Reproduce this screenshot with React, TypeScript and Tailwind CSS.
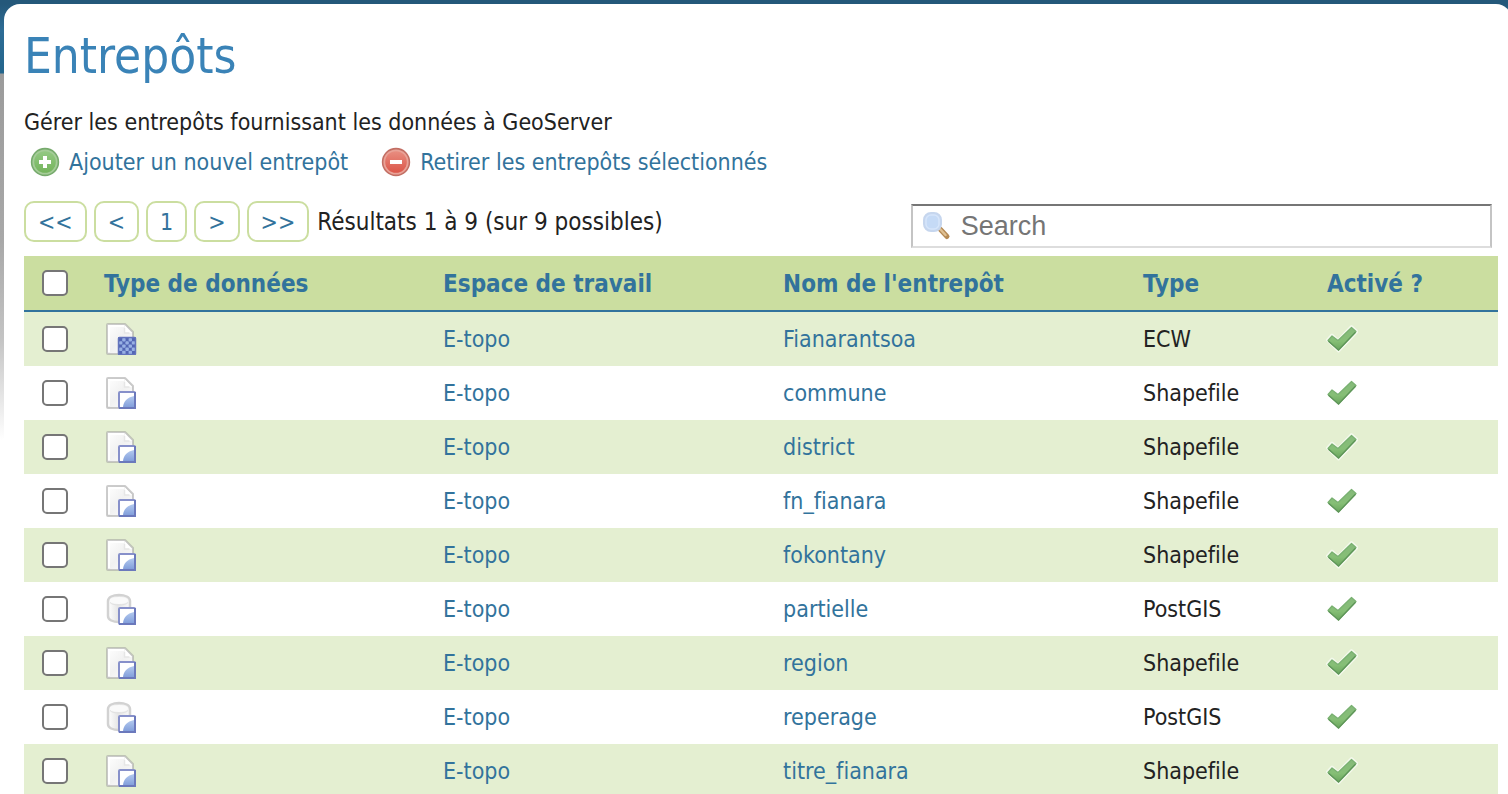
import React from "react";

type Kind = "raster" | "vector" | "database";

interface Store {
  kind: Kind;
  workspace: string;
  name: string;
  type: string;
}

const stores: Store[] = [
  { kind: "raster", workspace: "E-topo", name: "Fianarantsoa", type: "ECW" },
  { kind: "vector", workspace: "E-topo", name: "commune", type: "Shapefile" },
  { kind: "vector", workspace: "E-topo", name: "district", type: "Shapefile" },
  { kind: "vector", workspace: "E-topo", name: "fn_fianara", type: "Shapefile" },
  { kind: "vector", workspace: "E-topo", name: "fokontany", type: "Shapefile" },
  { kind: "database", workspace: "E-topo", name: "partielle", type: "PostGIS" },
  { kind: "vector", workspace: "E-topo", name: "region", type: "Shapefile" },
  { kind: "database", workspace: "E-topo", name: "reperage", type: "PostGIS" },
  { kind: "vector", workspace: "E-topo", name: "titre_fianara", type: "Shapefile" },
];

const kindLabels: Record<Kind, string> = {
  raster: "Données raster",
  vector: "Données vecteur",
  database: "Base de données",
};

const pages = ["<<", "<", "1", ">", ">>"];

function Gradients() {
  return (
    <svg width="0" height="0" className="absolute" aria-hidden="true">
      <defs>
        <linearGradient id="paper" x1="0" y1="0" x2="1" y2="1">
          <stop offset="0" stopColor="#ffffff" />
          <stop offset="0.5" stopColor="#f1f1f1" />
          <stop offset="1" stopColor="#ffffff" />
        </linearGradient>
        <linearGradient id="drum" x1="0" x2="1">
          <stop offset="0" stopColor="#ffffff" />
          <stop offset="0.45" stopColor="#e6e6e6" />
          <stop offset="1" stopColor="#f8f8f8" />
        </linearGradient>
        <linearGradient id="wave" x1="0" y1="0" x2="0" y2="1">
          <stop offset="0" stopColor="#b4caef" />
          <stop offset="1" stopColor="#829fdb" />
        </linearGradient>
        <linearGradient id="tick" x1="0" y1="0" x2="0" y2="1">
          <stop offset="0" stopColor="#86b97b" />
          <stop offset="0.6" stopColor="#86bf76" />
          <stop offset="1" stopColor="#6aa65d" />
        </linearGradient>
        <linearGradient id="green" x1="0" y1="0" x2="0" y2="1">
          <stop offset="0" stopColor="#93c983" />
          <stop offset="1" stopColor="#74b45c" />
        </linearGradient>
        <linearGradient id="red" x1="0" y1="0" x2="0" y2="1">
          <stop offset="0" stopColor="#e88d80" />
          <stop offset="1" stopColor="#dc5649" />
        </linearGradient>
      </defs>
    </svg>
  );
}

function StoreIcon({ kind }: { kind: Kind }) {
  const checks: [number, number][] = [];
  for (let row = 0; row < 5; row++) {
    for (let col = 0; col < 5; col++) {
      if ((row + col) % 2 === 1) checks.push([col, row]);
    }
  }
  return (
    <svg width="32" height="32" viewBox="0 0 32 32" role="img" aria-label={kindLabels[kind]} className="block">
      {kind === "database" ? (
        <g>
          <path
            d="M3 8C3 4 8 2 14 2s11 2 11 6v15c0 4-5 6-11 6S3 27 3 23Z"
            fill="url(#drum)"
            stroke="#d2d2d2"
            strokeWidth="2.500"
          />
          <ellipse cx="14" cy="7.500" rx="9" ry="3.500" fill="#fafafa" />
          <path d="M5 9.500c2 2 5 2.500 9 2.500s7-.5 9-2.500" fill="none" stroke="#e0e0e0" />
        </g>
      ) : (
        <g>
          <path
            d="M3 1H20L28 9V31H3Q2 31 2 30V2Q2 1 3 1Z"
            fill="url(#paper)"
            stroke="#999"
            strokeOpacity="0.5"
            strokeWidth="2"
            strokeLinejoin="round"
          />
          <path d="M4 29V3H19" fill="none" stroke="#fff" strokeWidth="2" />
          <path d="M20 2.500v7.500h7Z" fill="#fff" />
          <path d="M19.500 5v5h5" fill="none" stroke="#e6e6e6" strokeWidth="1.500" />
        </g>
      )}
      {kind === "raster" ? (
        <g>
          <rect x="13" y="14" width="18" height="18" rx="1" fill="#5366b4" />
          {checks.map(([col, row]) => (
            <rect key={`${col}-${row}`} x={14 + col * 3.2} y={15 + row * 3.2} width="3.400" height="3.400" rx="0.800" fill="#98b0e4" />
          ))}
          <rect x="13.500" y="14.500" width="17" height="17" rx="1" fill="none" stroke="#6373bd" strokeWidth="1.500" />
        </g>
      ) : (
        <g>
          <rect x="14" y="15" width="16" height="16" rx="1" fill="#fff" stroke="#8790ca" strokeWidth="2" />
          <path d="M18 30c.5-5.500 4-9.500 11-11v11Z" fill="url(#wave)" />
          <path d="M14 31h16V15" fill="none" stroke="#6b79bc" strokeWidth="2" />
        </g>
      )}
    </svg>
  );
}

function TickIcon() {
  return (
    <svg width="32" height="32" viewBox="0 0 32 32" role="img" aria-label="Activé" className="block">
      <path
        d="M1.500 17 6 12 12 17.500 25.500 3.500 31 8.500 12.500 28Z"
        fill="none"
        stroke="#fff"
        strokeOpacity="0.6"
        strokeWidth="3"
        strokeLinejoin="round"
      />
      <path
        d="M2 17.500 6 13 12 17.500 25.500 4.500 30 8.500 12.500 27Z"
        fill="url(#tick)"
        stroke="#78b070"
        strokeWidth="1.200"
        strokeLinejoin="round"
      />
      <path d="M2.500 18.300 12.500 27 29.500 9.200" fill="none" stroke="#5f9659" strokeWidth="1.300" strokeLinejoin="round" />
    </svg>
  );
}

function RoundIcon({ tone }: { tone: "add" | "remove" }) {
  const add = tone === "add";
  return (
    <svg width="32" height="32" viewBox="0 0 32 32" aria-hidden="true" className="block shrink-0">
      <circle cx="16" cy="16" r="14.200" fill={add ? "#76aa6c" : "#c26e63"} />
      <circle cx="16" cy="16" r="12.600" fill={add ? "#a5cc98" : "#e9a297"} />
      <circle cx="16" cy="16" r="10.800" fill={add ? "url(#green)" : "url(#red)"} />
      <path d={add ? "M14 10h4v4h4v4h-4v4h-4v-4h-4v-4h4Z" : "M10 14h12v4H10Z"} fill="#fff" />
    </svg>
  );
}

function SearchIcon() {
  return (
    <svg width="32" height="32" viewBox="0 0 32 32" aria-hidden="true" className="block shrink-0">
      <path d="M19.500 19.500l6.500 7" stroke="#b58a55" strokeWidth="5" strokeLinecap="round" />
      <path d="M19 19l5.500 6" stroke="#dfc093" strokeWidth="2.500" strokeLinecap="round" />
      <rect x="3" y="3" width="17" height="18" rx="7" fill="#c6d9f3" stroke="#c6d6ee" strokeWidth="2" />
      <rect x="5" y="5" width="13" height="14" rx="5" fill="#c5daf6" stroke="#d6e5fa" strokeWidth="1.500" />
    </svg>
  );
}

function Check({ label }: { label: string }) {
  return (
    <input
      type="checkbox"
      aria-label={label}
      className="block size-[26px] appearance-none rounded-[5px] border-2 border-[#767676] bg-white checked:bg-[#32739c]"
    />
  );
}

function SiteLink({ children }: { children: React.ReactNode }) {
  return (
    <a href="#" className="text-[#32739c] hover:underline">
      {children}
    </a>
  );
}

export default function App() {
  return (
    <div className="min-h-screen overflow-hidden bg-[linear-gradient(to_bottom,#24587a_0,#24587a_4px,#2d6c95_30px,#23658c_73px,#9b9b9b_74px,#a8a8a8_240px,#c4c4c4_340px,#ffffff_440px)] pt-1 pl-1 font-['DejaVu_Sans_Condensed','DejaVu_Sans',sans-serif] text-[23px] leading-8 text-[#222222] [font-variant-ligatures:none]">
      <Gradients />
      <main className="-mr-1 min-h-screen rounded-t-2xl bg-white pt-6 pr-[14px] pl-5">
        <h1 className="text-[49px] leading-[58px] text-[#3a83b7]">Entrepôts</h1>
        <p className="mt-5">Gérer les entrepôts fournissant les données à GeoServer</p>

        <div className="mt-1 flex gap-8 pl-[5px]">
          <a href="#" className="flex h-10 items-center gap-2 text-[#32739c] hover:underline">
            <RoundIcon tone="add" />
            Ajouter un nouvel entrepôt
          </a>
          <a href="#" className="flex h-10 items-center gap-2 text-[#32739c] hover:underline">
            <RoundIcon tone="remove" />
            Retirer les entrepôts sélectionnés
          </a>
        </div>

        <div className="mt-[19px] flex h-[55px] items-start justify-between pr-[6px]">
          <div className="flex items-center gap-2">
            <nav className="flex gap-[7px]" aria-label="Pagination">
              {pages.map((page) => (
                <a
                  key={page}
                  href="#"
                  className="flex h-[41px] items-center rounded-[10px] border-2 border-[#cbdea0] px-3 pt-px text-[#32739c]"
                >
                  {page}
                </a>
              ))}
            </nav>
            <span className="pt-px text-2xl">Résultats 1 à 9 (sur 9 possibles)</span>
          </div>
          <label className="mt-[3px] flex h-11 w-[39.6%] items-center gap-2 border-2 border-t-[#767676] border-r-[#c4c4c4] border-b-[#dddddd] border-l-[#c4c4c4] bg-white pl-2">
            <SearchIcon />
            <input
              type="text"
              aria-label="Search"
              placeholder="Search"
              className="min-w-0 flex-1 bg-transparent font-['Liberation_Sans',sans-serif] text-[27px] leading-8 outline-none placeholder:text-[#757575]"
            />
          </label>
        </div>

        <table className="w-full table-fixed border-separate border-spacing-0 text-left">
          <colgroup>
            <col className="w-[4.75%]" />
            <col className="w-[23%]" />
            <col className="w-[23.07%]" />
            <col className="w-[24.42%]" />
            <col className="w-[12.48%]" />
            <col />
          </colgroup>
          <thead>
            <tr className="h-14 bg-[#cbdea0] text-2xl leading-8 text-[#32739c]">
              <th className="border-b-2 border-[#32739c] p-0 pl-[18px]">
                <Check label="Tout sélectionner" />
              </th>
              {["Type de données", "Espace de travail", "Nom de l'entrepôt", "Type", "Activé ?"].map((title) => (
                <th key={title} className="border-b-2 border-[#32739c] p-0 pt-0.5 pl-[10px] font-bold">
                  <a href="#">{title}</a>
                </th>
              ))}
            </tr>
          </thead>
          <tbody>
            {stores.map((store) => (
              <tr key={store.name} className="h-[54px] odd:bg-[#e4efd1]">
                <td className="p-0 pl-[18px]">
                  <Check label={`Sélectionner ${store.name}`} />
                </td>
                <td className="p-0 pl-[11px]">
                  <StoreIcon kind={store.kind} />
                </td>
                <td className="p-0 pl-[10px]">
                  <SiteLink>{store.workspace}</SiteLink>
                </td>
                <td className="p-0 pl-[10px]">
                  <SiteLink>{store.name}</SiteLink>
                </td>
                <td className="p-0 pl-[10px]">{store.type}</td>
                <td className="p-0 pl-[9px]">
                  <TickIcon />
                </td>
              </tr>
            ))}
          </tbody>
        </table>
      </main>
    </div>
  );
}
